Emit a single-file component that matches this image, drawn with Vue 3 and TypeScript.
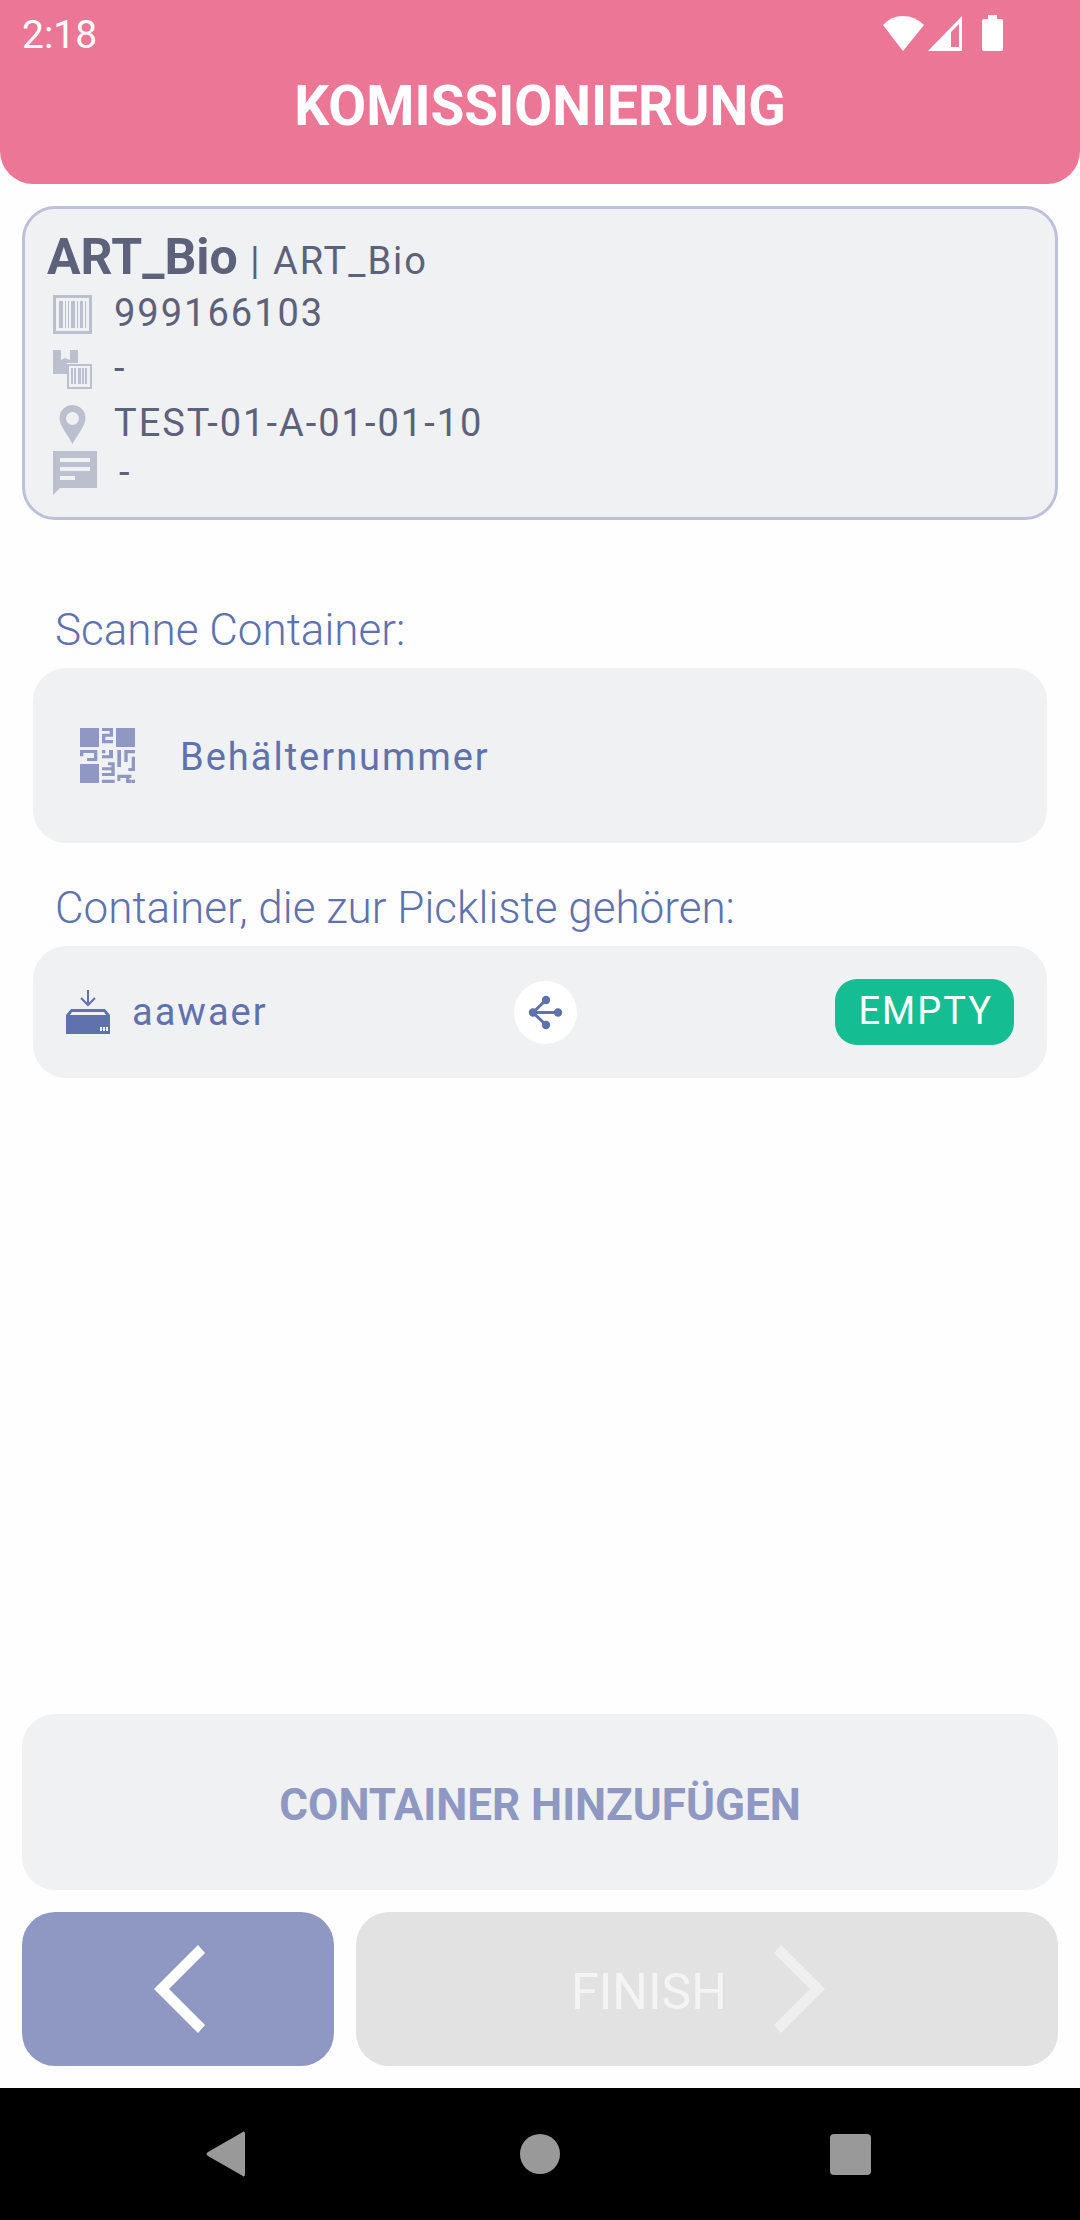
<script setup lang="ts">
import { ref } from 'vue'

interface Detail {
  icon: 'barcode' | 'package' | 'pin' | 'note'
  label: string
  value: string
}

interface Container {
  name: string
  state: string
}

const details: Detail[] = [
  { icon: 'barcode', label: 'Artikelnummer', value: '999166103' },
  { icon: 'package', label: 'Charge', value: '-' },
  { icon: 'pin', label: 'Lagerplatz', value: 'TEST-01-A-01-01-10' },
  { icon: 'note', label: 'Bemerkung', value: '-' },
]

const containers: Container[] = [{ name: 'aawaer', state: 'EMPTY' }]
const containerNumber = ref('')
</script>

<template>
  <div class="screen">
    <header class="header">
      <div class="status">
        <span>2:18</span>
        <div class="status-icons">
          <svg width="42" height="36" viewBox="0 0 42 36" aria-hidden="true">
            <path d="M1 10Q9 1 21 1T42 10L21 36z" />
          </svg>
          <svg class="signal" width="34" height="36" viewBox="0 0 34 36" aria-hidden="true">
            <path fill-rule="evenodd" d="M34 1V36H0zM31 9L23 17V32H31z" />
          </svg>
          <svg width="21" height="36" viewBox="0 0 21 36" aria-hidden="true">
            <path d="M6 0h9v4h4q2 0 2 2v28q0 2-2 2H2q-2 0-2-2V6q0-2 2-2h4z" />
          </svg>
        </div>
      </div>
      <h1>KOMISSIONIERUNG</h1>
    </header>

    <main class="content">
      <section class="article">
        <h2><strong>ART_Bio </strong><span>| ART_Bio</span></h2>
        <ul>
          <li v-for="d in details" :key="d.icon" :class="d.icon">
            <svg v-if="d.icon === 'barcode'" width="39" height="39" viewBox="0 0 39 39" role="img" :aria-label="d.label">
              <path fill-rule="evenodd" d="M0 0h39v39H0zM3 3v33h33V3z" />
              <path d="M6 6h4v27H6zM12 6h1v27h-1zM15 6h1v27h-1zM18 6h4v27h-4zM24 6h1v27h-1zM27 6h3v27h-3zM32 6h1v27h-1z" />
            </svg>
            <svg v-else-if="d.icon === 'package'" width="39" height="39" viewBox="0 0 39 39" role="img" :aria-label="d.label">
              <path d="M0 0h8v10l4-2 5 2V0h8v13H14v11H0z" />
              <path fill-rule="evenodd" d="M14 14h25v25H14zM16 16v21h21V16z" />
              <path d="M18 18h2v16h-2zM21 18h2v16h-2zM25 18h3v16h-3zM29 18h2v16h-2zM32 18h2v16h-2z" />
            </svg>
            <svg v-else-if="d.icon === 'pin'" width="39" height="39" viewBox="0 0 39 39" role="img" :aria-label="d.label">
              <path fill-rule="evenodd" d="M19.500 0A13 13 0 0 0 6.500 13C6.500 21 15 30 19.500 39C24 30 32.500 21 32.500 13A13 13 0 0 0 19.500 0zM19.500 7a6.500 6.500 0 1 1 0 13a6.500 6.500 0 0 1 0-13z" />
            </svg>
            <svg v-else width="44" height="44" viewBox="0 0 44 44" role="img" :aria-label="d.label">
              <path fill-rule="evenodd" d="M0 0h44v37H7l-7 7zM7 7v4h30V7zM7 16v4h30v-4zM7 25v4h15v-4z" />
            </svg>
            <span>{{ d.value }}</span>
          </li>
        </ul>
      </section>

      <section class="scan">
        <label class="caption" for="container-number">Scanne Container:</label>
        <div class="panel field">
          <svg width="55" height="55" viewBox="0 0 165 165" aria-hidden="true">
            <path d="M0 0h57v57H0zM108 0h57v57h-57zM0 108h57v57H0z" />
            <path d="M66 0h33v26H76v10h23v10H66V17h23V9H66z" />
            <path d="M0 66h52v33H21v-9h21V75H10v10H0z" />
            <path d="M66 66h10v10H66zM87 66h12v25H66v-9h21z" />
            <path d="M84 103h20v41H66v-9h28v-8H66v-9h28v-6H84zM66 155h38v10H66z" />
            <path d="M112 66h11v51h-11zM133 66h32v10h-22v26h-10zM155 86h10v43h-20v-9h10z" />
            <path d="M112 140h42v10h-33v9h-9zM138 150h10v5h6v10h-16zM155 155h10v10h-10z" />
          </svg>
          <input id="container-number" v-model="containerNumber" type="text" placeholder="Behälternummer" />
        </div>
      </section>

      <section class="assigned">
        <h3 class="caption">Container, die zur Pickliste gehören:</h3>
        <div v-for="c in containers" :key="c.name" class="panel container-row">
          <div class="container-name">
            <svg width="44" height="44" viewBox="0 0 44 44" aria-hidden="true">
              <path class="arrow" d="M22 0v14M15 8l7 7 7-7" />
              <path fill-rule="evenodd" d="M5 19h34l5 6v19H0V25zM6 22l-2 3h36l-2-3z" />
              <path class="marks" d="M35 37v4M38 37v4M41 37v4" />
            </svg>
            <span>{{ c.name }}</span>
          </div>
          <button class="share" type="button" aria-label="Container teilen">
            <svg width="35" height="35" viewBox="0 0 35 35" aria-hidden="true">
              <path class="links" d="M18 5L5 17.500L18 30M5 17.500H30" />
              <circle cx="5" cy="17.500" r="4.200" />
              <circle cx="18" cy="5" r="4.200" />
              <circle cx="30" cy="17.500" r="4.200" />
              <circle cx="18" cy="30" r="4.200" />
            </svg>
          </button>
          <span class="badge">{{ c.state }}</span>
        </div>
      </section>
    </main>

    <footer class="actions">
      <button class="add" type="button">CONTAINER HINZUFÜGEN</button>
      <div class="steps">
        <button class="back" type="button" aria-label="Zurück">
          <svg width="88" height="88" viewBox="0 0 88 88" aria-hidden="true">
            <path d="M64 0L20 44L64 88L71 80L35 44L71 8z" />
          </svg>
        </button>
        <button class="finish" type="button" disabled>
          <span>FINISH</span>
          <svg width="88" height="88" viewBox="0 0 88 88" aria-hidden="true">
            <path d="M26 0L70 44L26 88L19 80L55 44L19 8z" />
          </svg>
        </button>
      </div>
    </footer>

    <nav class="system-nav" aria-label="System">
      <button type="button" aria-label="Back">
        <svg width="48" height="48" viewBox="0 0 48 48" aria-hidden="true">
          <path d="M37 2.500Q40 0 40 4V44Q40 48 37 45.500L3 26Q0 24 3 22z" />
        </svg>
      </button>
      <button type="button" aria-label="Home">
        <svg width="48" height="48" viewBox="0 0 48 48" aria-hidden="true"><circle cx="24" cy="24" r="20" /></svg>
      </button>
      <button type="button" aria-label="Recents">
        <svg width="48" height="48" viewBox="0 0 48 48" aria-hidden="true"><rect x="3" y="4" width="41" height="41" rx="4" /></svg>
      </button>
    </nav>
  </div>
</template>

<style>
body {
  margin: 0;
  background: #ffffff;
}
</style>

<style scoped>
.screen {
  display: flex;
  flex-direction: column;
  min-height: 100vh;
  font-family: Roboto, sans-serif;
  font-size: 38px;
  background: #fefefe;
}

h1,
h2,
h3,
ul {
  margin: 0;
  padding: 0;
}

svg {
  display: block;
  flex: none;
  fill: currentColor;
}

button {
  display: flex;
  align-items: center;
  justify-content: center;
  margin: 0;
  padding: 0;
  border: 0;
  font-family: inherit;
}

.header {
  padding-bottom: 38px;
  border-radius: 0 0 33px 33px;
  color: #ffffff;
  background: #ec7696;
}

.status {
  display: flex;
  align-items: center;
  justify-content: space-between;
  height: 66px;
  padding: 0 77px 0 22px;
  font-size: 39px;
}

.status > span {
  padding-top: 4px;
}

.status-icons {
  display: flex;
  gap: 4px;
}

.signal {
  margin-right: 16px;
}

h1 {
  font-size: 55px;
  font-weight: 700;
  line-height: 80px;
  text-align: center;
}

.content {
  flex: 1;
  padding: 22px;
}

.article {
  padding: 22px;
  border: 3px solid #bcc0d9;
  border-radius: 33px;
  color: #5d617a;
  background: #eff1f2;
}

h2 {
  font-size: 38px;
  font-weight: 400;
  line-height: 52px;
}

h2 strong {
  font-size: 50px;
}

h2 span,
li,
.container-name,
.badge,
input {
  letter-spacing: 2px;
}

ul {
  margin-top: 8px;
  padding-left: 6px;
  list-style: none;
}

li {
  display: flex;
  align-items: center;
  gap: 22px;
  margin-top: 16px;
  line-height: 36px;
}

li:first-child {
  margin-top: 0;
}

li.note {
  margin-top: 7px;
}

li svg {
  color: #bcbfcd;
}

li span {
  padding-bottom: 3px;
}

section.scan,
section.assigned {
  padding: 0 11px;
}

.scan {
  margin-top: 84px;
}

.assigned {
  margin-top: 39px;
}

.caption {
  display: block;
  padding: 0 22px;
  font-size: 44px;
  font-weight: 300;
  line-height: 52px;
  color: #5f72ad;
}

.panel {
  margin-top: 12px;
  border-radius: 33px;
  color: #5f72ad;
  background: #eff1f2;
}

.field {
  display: flex;
  align-items: center;
  gap: 45px;
  padding: 60px 47px;
}

.field svg {
  color: #8e98c2;
}

input {
  flex: 1;
  min-width: 0;
  height: 55px;
  box-sizing: border-box;
  padding: 3px 0 0;
  border: 0;
  outline: 0;
  font-family: inherit;
  font-size: 38px;
  color: inherit;
  background: transparent;
}

input::placeholder {
  color: inherit;
  opacity: 1;
}

.container-row {
  display: grid;
  grid-template-columns: 41fr auto 40fr;
  align-items: center;
  padding: 33px;
}

.container-name {
  display: flex;
  align-items: center;
  gap: 22px;
}

.arrow,
.marks,
.links {
  fill: none;
  stroke: currentColor;
  stroke-width: 2;
}

.links {
  stroke-width: 3;
}

.marks {
  stroke: #eff1f2;
}

.share {
  width: 63px;
  height: 63px;
  border-radius: 50%;
  color: #5f72ad;
  background: #ffffff;
}

.badge {
  justify-self: end;
  padding: 0 21px 2px 23px;
  border-radius: 22px;
  line-height: 64px;
  color: #ffffff;
  background: #15be92;
}

.actions {
  display: flex;
  flex-direction: column;
  gap: 22px;
  padding: 0 22px 22px;
}

.actions button {
  border-radius: 33px;
}

.actions .add {
  padding: 65px 22px 59px;
  font-size: 44px;
  font-weight: 700;
  line-height: 52px;
  color: #8e98c2;
  background: #eff1f2;
}

.steps {
  display: grid;
  grid-template-columns: 4fr 9fr;
  gap: 22px;
}

.steps button {
  padding: 33px;
}

.back {
  color: #ffffff;
  background: #8e98c2;
}

.finish {
  gap: 28px;
  font-size: 50px;
  color: #f4f4f4;
  background: #e2e2e2;
}

.finish span {
  padding-top: 6px;
}

.finish svg {
  color: #efefef;
}

.system-nav {
  display: grid;
  grid-template-columns: repeat(3, 1fr);
  padding: 0 74px;
  background: #000000;
}

.system-nav button {
  height: 132px;
  color: #999999;
  background: transparent;
}
</style>
